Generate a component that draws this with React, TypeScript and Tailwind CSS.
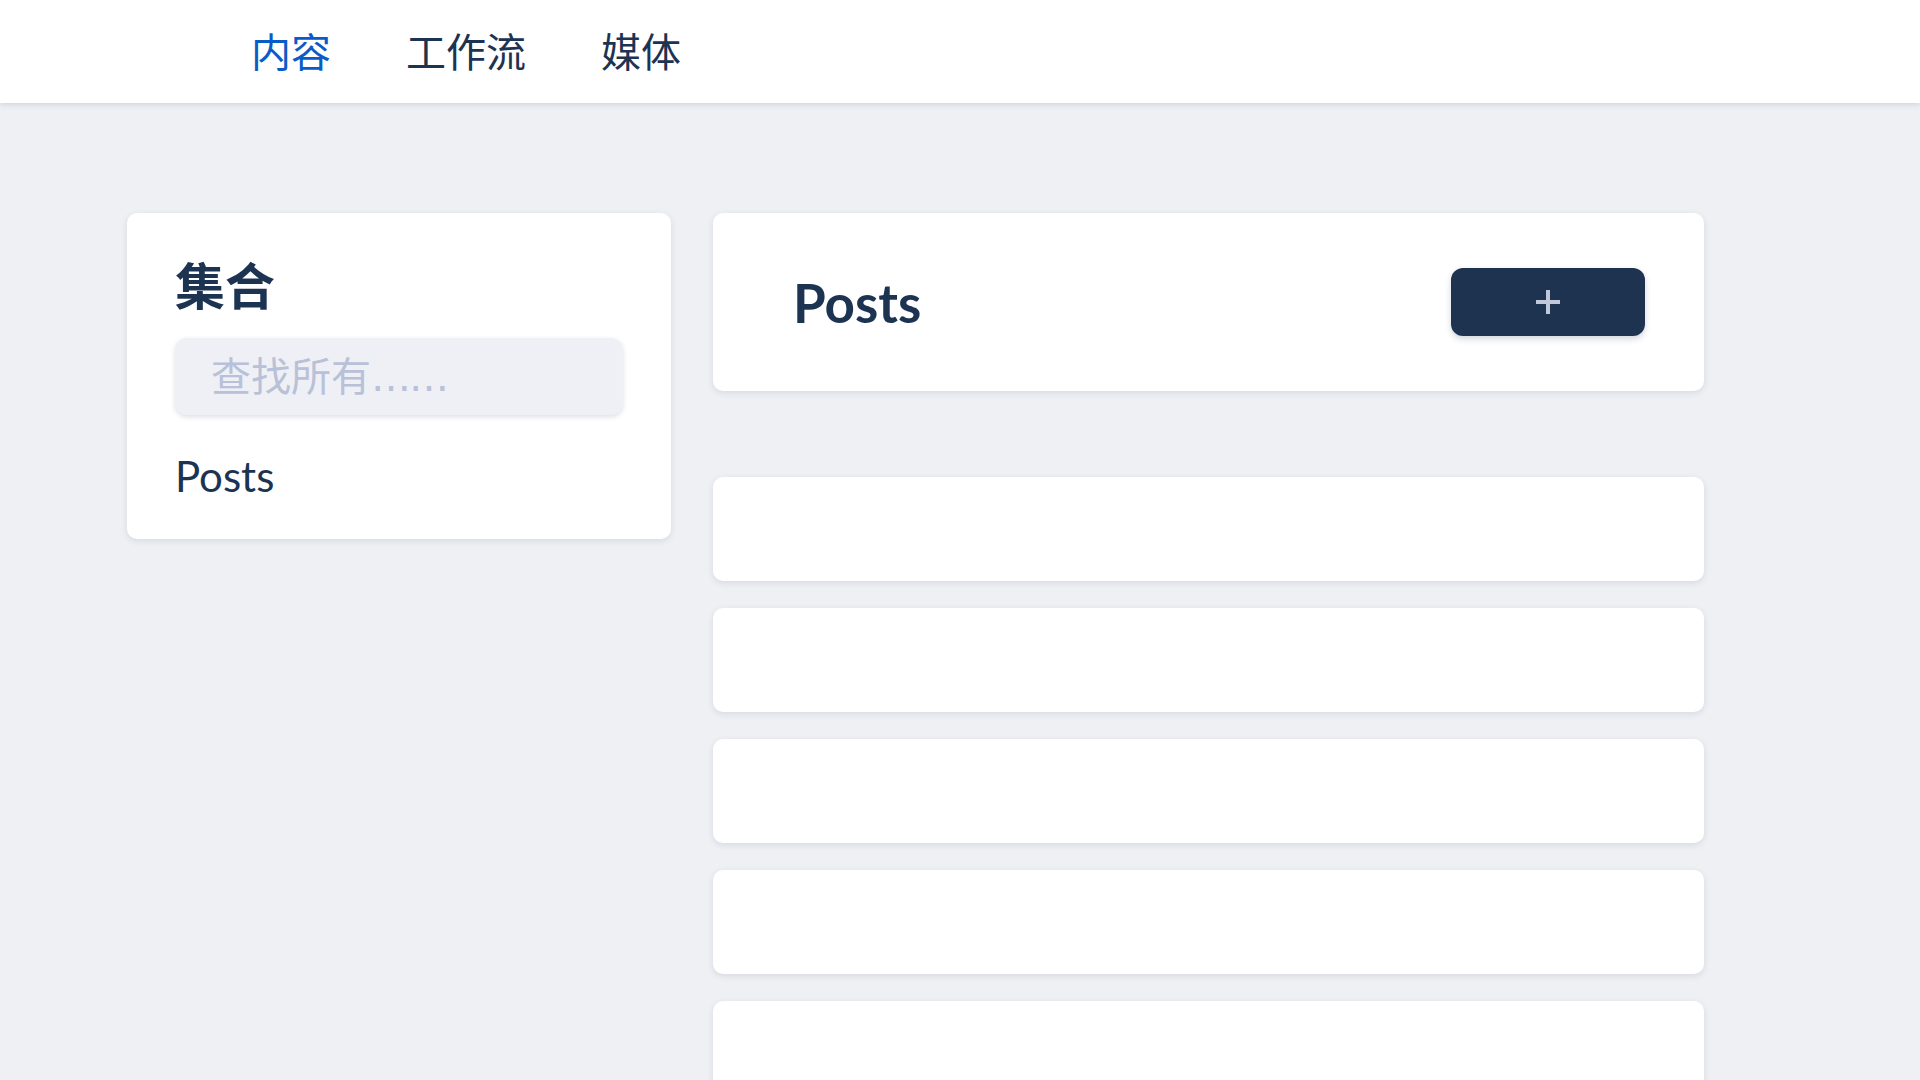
import React from 'react';

const font = { fontFamily: 'Lato, "Noto Sans CJK SC", sans-serif' };

const navItems = [
  { label: '内容', active: true },
  { label: '工作流', active: false },
  { label: '媒体', active: false },
];

const PlusIcon = () => (
  <svg width="24" height="24" viewBox="0 0 24 24" className="text-[#c0c8da]">
    <path d="M12 0v24M0 12h24" stroke="currentColor" strokeWidth="4" />
  </svg>
);

export default function App() {
  return (
    <div className="min-h-screen bg-[#eef0f4]" style={font}>
      <header className="relative z-10 h-[103px] bg-white shadow-[0_2px_5px_rgba(40,55,90,0.14)] flex items-center pl-[251px] gap-[75px]">
        {navItems.map((item) => (
          <a
            key={item.label}
            className={`text-[40px] leading-none ${item.active ? 'text-[#0a5bc8]' : 'text-[#1c3352]'}`}
          >
            {item.label}
          </a>
        ))}
      </header>

      <main className="flex items-start gap-[42px] pl-[127px] pt-[110px]">
        {/* collections */}
        <aside className="w-[544px] h-[326px] bg-white rounded-[10px] shadow-[0_2px_6px_rgba(40,55,90,0.12)] px-12 pt-[48px]">
          <h2 className="text-[50px] leading-none font-bold text-[#1c3352]">集合</h2>
          <div className="mt-[27px] h-[77px] rounded-[12px] bg-[#eef0f5] shadow-[0_2px_5px_rgba(40,55,90,0.16)] flex items-center pl-[36px]">
            <span className="text-[40px] leading-none text-[#b9c1d8]">
              查找所有<span className="font-['DejaVu_Sans',sans-serif] tracking-[-2px]">……</span>
            </span>
          </div>
          <div className="mt-[40px] text-[42px] leading-none text-[#1c3352]">Posts</div>
        </aside>

        {/* entries */}
        <section className="w-[991px] flex flex-col">
          <div className="h-[178px] bg-white rounded-[10px] shadow-[0_2px_6px_rgba(40,55,90,0.12)] flex items-center justify-between pl-[80px] pr-[59px]">
            <h1 className="text-[53px] leading-none font-bold text-[#1c3352]">Posts</h1>
            <button className="w-[194px] h-[68px] rounded-[12px] bg-[#1e3350] shadow-[0_3px_6px_rgba(30,50,80,0.2)] flex items-center justify-center">
              <PlusIcon />
            </button>
          </div>
          <div className="mt-[86px] flex flex-col gap-[27px]">
            {[0, 1, 2, 3, 4].map((i) => (
              <div
                key={i}
                className="h-[104px] bg-white rounded-[10px] shadow-[0_2px_6px_rgba(40,55,90,0.12)]"
              />
            ))}
          </div>
        </section>
      </main>
    </div>
  );
}
